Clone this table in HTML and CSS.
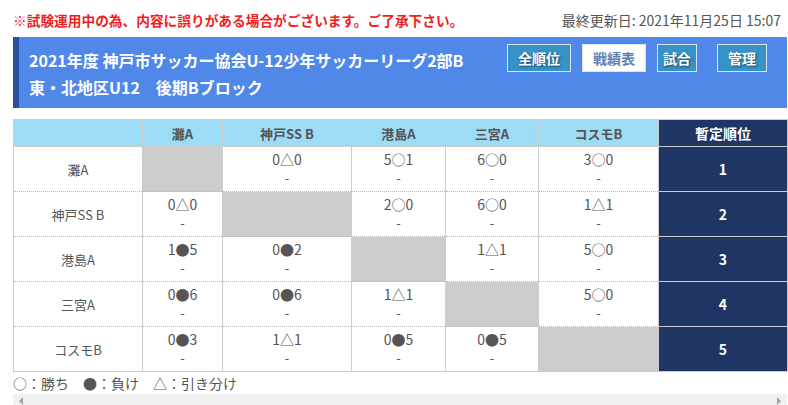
FILE: index.html
```html
<!DOCTYPE html>
<html lang="ja">
<head>
  <meta charset="UTF-8">
  <title>戦績表</title>
  <meta name="viewport" content="width=device-width, initial-scale=1.0">
  <link rel="stylesheet" href="styles.css">
</head>
<body>
  <div class="wrap">
    <div class="topbar">
      <p class="notice">※試験運用中の為、内容に誤りがある場合がございます。ご了承下さい。</p>
      <p class="updated">最終更新日: 2021年11月25日 15:07</p>
    </div>

    <div class="league-head">
      <h1 class="league-title">2021年度 神戸市サッカー協会U-12少年サッカーリーグ2部B<br>東・北地区U12　後期Bブロック</h1>
      <nav class="league-nav">
        <a class="nav-btn">全順位</a>
        <a class="nav-btn current">戦績表</a>
        <a class="nav-btn narrow">試合</a>
        <a class="nav-btn last">管理</a>
      </nav>
    </div>

    <table class="results">
      <colgroup>
        <col style="width:129px">
        <col style="width:80px">
        <col style="width:129px">
        <col style="width:94px">
        <col style="width:93px">
        <col style="width:120px">
        <col style="width:129px">
      </colgroup>
      <thead>
        <tr>
          <th></th>
          <th>灘A</th>
          <th>神戸SS B</th>
          <th>港島A</th>
          <th>三宮A</th>
          <th>コスモB</th>
          <th class="rank">暫定順位</th>
        </tr>
      </thead>
      <tbody>
        <tr>
          <td class="team">灘A</td>
          <td class="self"></td>
          <td><span class="score">0△0</span><span class="date">-</span></td>
          <td><span class="score">5○1</span><span class="date">-</span></td>
          <td><span class="score">6○0</span><span class="date">-</span></td>
          <td><span class="score">3○0</span><span class="date">-</span></td>
          <td class="rank">1</td>
        </tr>
        <tr>
          <td class="team">神戸SS B</td>
          <td><span class="score">0△0</span><span class="date">-</span></td>
          <td class="self"></td>
          <td><span class="score">2○0</span><span class="date">-</span></td>
          <td><span class="score">6○0</span><span class="date">-</span></td>
          <td><span class="score">1△1</span><span class="date">-</span></td>
          <td class="rank">2</td>
        </tr>
        <tr>
          <td class="team">港島A</td>
          <td><span class="score">1●5</span><span class="date">-</span></td>
          <td><span class="score">0●2</span><span class="date">-</span></td>
          <td class="self"></td>
          <td><span class="score">1△1</span><span class="date">-</span></td>
          <td><span class="score">5○0</span><span class="date">-</span></td>
          <td class="rank">3</td>
        </tr>
        <tr>
          <td class="team">三宮A</td>
          <td><span class="score">0●6</span><span class="date">-</span></td>
          <td><span class="score">0●6</span><span class="date">-</span></td>
          <td><span class="score">1△1</span><span class="date">-</span></td>
          <td class="self"></td>
          <td><span class="score">5○0</span><span class="date">-</span></td>
          <td class="rank">4</td>
        </tr>
        <tr>
          <td class="team">コスモB</td>
          <td><span class="score">0●3</span><span class="date">-</span></td>
          <td><span class="score">1△1</span><span class="date">-</span></td>
          <td><span class="score">0●5</span><span class="date">-</span></td>
          <td><span class="score">0●5</span><span class="date">-</span></td>
          <td class="self"></td>
          <td class="rank">5</td>
        </tr>
      </tbody>
    </table>

    <p class="legend">○：勝ち　●：負け　△：引き分け</p>

    <div class="scrollbar">
      <span class="arrow left"></span>
      <span class="arrow right"></span>
    </div>
  </div>
</body>
</html>
```

FILE: styles.css
```css
html, body {
  margin: 0;
  padding: 0;
  background: #fff;
  font-family: "Noto Sans CJK JP", "Noto Sans", sans-serif;
  color: #555;
}

.wrap {
  padding: 0 1px 0 13px;
}

.topbar {
  display: flex;
  justify-content: space-between;
  align-items: center;
  height: 37px;
  padding-top: 2px;
  box-sizing: border-box;
}

.topbar p {
  margin: 0;
  line-height: 20px;
}

.notice {
  color: #f01e1e;
  font-weight: bold;
  font-size: 13.7px;
}

.updated {
  font-size: 14px;
  color: #555;
  padding-right: 6px;
}

.league-head {
  display: flex;
  height: 71px;
  box-sizing: border-box;
  background: #5088e9;
  border-left: 6px solid #2b509f;
  padding: 10px 20px 0 10px;
}

.league-title {
  flex: 1;
  margin: 0;
  font-size: 16px;
  line-height: 27px;
  color: #fff;
  font-weight: bold;
}

.league-nav {
  display: flex;
  align-items: flex-start;
  margin-top: -3px;
}

.nav-btn {
  display: block;
  height: 28px;
  box-sizing: border-box;
  line-height: 26px;
  padding: 0 10px;
  margin-left: 11px;
  background: #3692c7;
  border: 1px solid #dde3ea;
  color: #fff;
  font-size: 14px;
  font-weight: bold;
  text-shadow: 1px 1px 2px rgba(0,0,0,0.55);
}

.nav-btn.current {
  background: #fff;
  color: #5f7fae;
  text-shadow: none;
}

.nav-btn.narrow {
  padding: 0 5px;
}

.nav-btn.last {
  margin-left: 20px;
}

.results {
  width: 774px;
  margin-top: 11px;
  border-collapse: collapse;
  table-layout: fixed;
  border: 1px solid #ccc;
}

.results th {
  height: 26px;
  padding: 0;
  background: #9ddcf7;
  border: 1px solid #ccc;
  font-size: 13px;
  font-weight: bold;
  color: #555;
}

.results td {
  height: 44px;
  padding: 0;
  text-align: center;
  vertical-align: top;
  border-left: 1px solid #ccc;
  border-right: 1px solid #ccc;
  border-top: 1px dotted #bbb;
  border-bottom: 1px dotted #bbb;
  font-size: 14px;
}

.results td.team {
  vertical-align: middle;
  font-size: 13px;
}

.results td.self {
  background: #cccccc;
}

.results .rank {
  background: #1f3564;
  color: #fff;
  font-weight: bold;
  vertical-align: middle;
  border-top: 1px solid #ccc;
  border-bottom: 1px solid #ccc;
}

.results th.rank {
  font-size: 14px;
}

.score {
  display: block;
  line-height: 20px;
  margin-top: 2px;
}

.date {
  display: block;
  line-height: 18px;
  font-size: 13px;
}

.legend {
  margin: 0;
  height: 22px;
  line-height: 22px;
  font-size: 14px;
  color: #555;
}

.scrollbar {
  display: flex;
  justify-content: space-between;
  align-items: center;
  height: 14px;
  background: #f1f1f1;
  padding: 0 6px;
}

.arrow {
  width: 0;
  height: 0;
  border-top: 4px solid transparent;
  border-bottom: 4px solid transparent;
}

.arrow.left {
  border-right: 4px solid #a3a3a3;
}

.arrow.right {
  border-left: 4px solid #a3a3a3;
}
```
